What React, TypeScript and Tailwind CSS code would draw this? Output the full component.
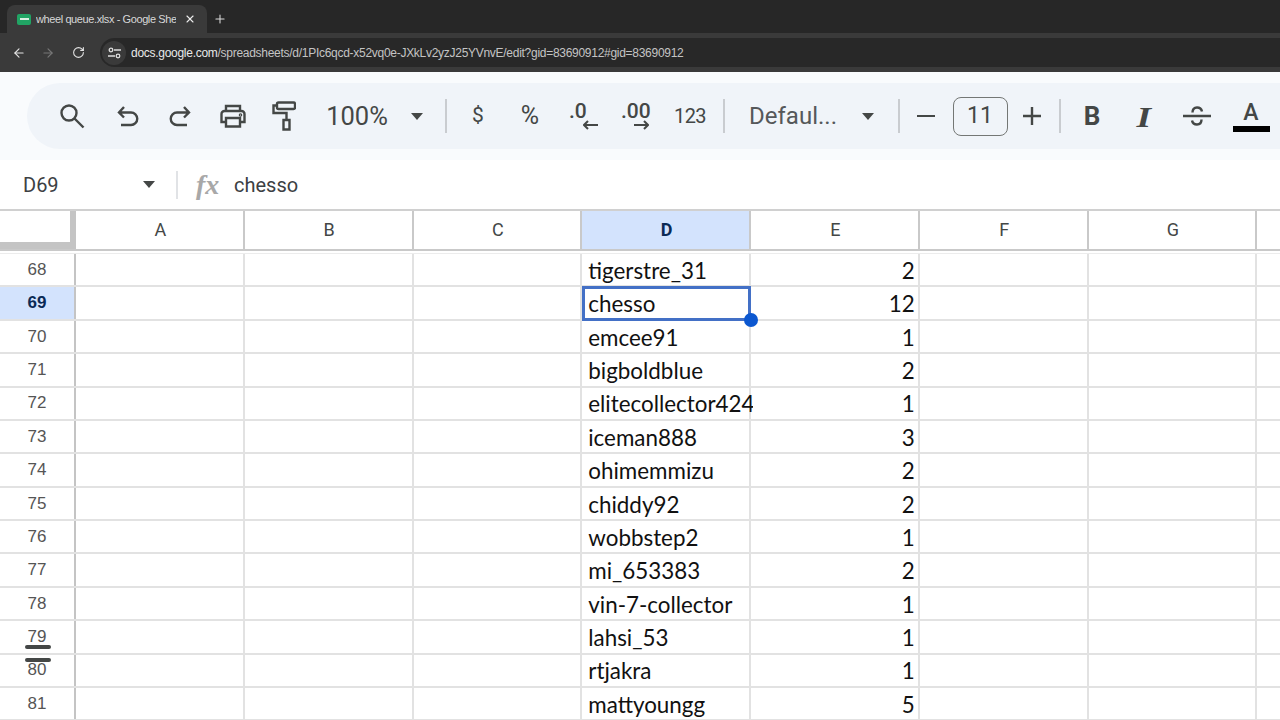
import type { ReactNode } from 'react';
import { ArrowLeft, ArrowRight, RotateCw, Plus, X } from 'lucide-react';

const ROWS: { n: number; name: string; count: number }[] = [
  { n: 68, name: 'tigerstre_31', count: 2 },
  { n: 69, name: 'chesso', count: 12 },
  { n: 70, name: 'emcee91', count: 1 },
  { n: 71, name: 'bigboldblue', count: 2 },
  { n: 72, name: 'elitecollector424', count: 1 },
  { n: 73, name: 'iceman888', count: 3 },
  { n: 74, name: 'ohimemmizu', count: 2 },
  { n: 75, name: 'chiddy92', count: 2 },
  { n: 76, name: 'wobbstep2', count: 1 },
  { n: 77, name: 'mi_653383', count: 2 },
  { n: 78, name: 'vin-7-collector', count: 1 },
  { n: 79, name: 'lahsi_53', count: 1 },
  { n: 80, name: 'rtjakra', count: 1 },
  { n: 81, name: 'mattyoungg', count: 5 },
];

const COLUMNS = ['A', 'B', 'C', 'D', 'E', 'F', 'G'];

function Tool({ className, children }: { className: string; children: ReactNode }) {
  return <div className={`flex h-full shrink-0 items-center justify-center ${className}`}>{children}</div>;
}

function Icon({ w, h, children }: { w: number; h: number; children: ReactNode }) {
  return (
    <svg width={w} height={h} viewBox={`0 0 ${w} ${h}`} fill="none" stroke="#444746" strokeWidth="2.4">
      {children}
    </svg>
  );
}

function Caret() {
  return (
    <svg width="12" height="7" viewBox="0 0 12 7">
      <path d="M0 0h12L6 7z" fill="#444746" />
    </svg>
  );
}

function Sep() {
  return <div className="h-[34px] w-[2px] bg-[#c9ccd0]" />;
}

export default function App() {
  return (
    <div className="flex h-[720px] w-[1280px] flex-col overflow-hidden bg-white font-['Roboto',sans-serif]">
      {/* browser chrome */}
      <div className="h-[33px] shrink-0 bg-[#272727] pl-[7px] pt-[5px]">
        <div className="flex items-center">
          <div className="flex h-[28px] w-[200px] items-center rounded-t-lg bg-[#3a3a3a] pl-[10px]">
            <div className="flex h-[11px] w-[14px] items-center justify-end rounded-[2px] bg-[#21a464] pr-[2px]">
              <div className="h-[2px] w-[9px] bg-[#d8f0e2]" />
            </div>
            <span className="ml-[5px] w-[140px] overflow-hidden whitespace-nowrap font-['Liberation_Sans',sans-serif] text-[11px] tracking-[-0.4px] text-[#d8d8d8]">
              wheel queue.xlsx - Google Shee
            </span>
            <X size={12} strokeWidth={2.2} className="ml-[8px] text-[#ececec]" />
          </div>
          <Plus size={14} strokeWidth={1.8} className="ml-[6px] text-[#dcdcdc]" />
        </div>
      </div>
      <div className="flex h-[39px] shrink-0 items-center bg-[#3a3a3a] pl-[12px]">
        <ArrowLeft size={14} strokeWidth={2} className="text-[#e3e3e3]" />
        <ArrowRight size={14} strokeWidth={2} className="ml-[15px] text-[#777777]" />
        <RotateCw size={13} strokeWidth={2} className="ml-[17px] text-[#e3e3e3]" />
        <div className="ml-[15px] flex h-[29px] flex-1 items-center rounded-l-full bg-[#282828] pl-[2px]">
          <div className="flex h-[24px] w-[24px] items-center justify-center rounded-full bg-[#3a3a3a]">
            <svg width="13" height="12" viewBox="0 0 13 12" fill="none" stroke="#dedede" strokeWidth="1.3">
              <circle cx="3" cy="3" r="1.8" />
              <path d="M6 3h7M0 9h7" />
              <circle cx="10" cy="9" r="1.8" />
            </svg>
          </div>
          <span className="ml-[5px] whitespace-nowrap font-['Liberation_Sans',sans-serif] text-[12px] tracking-[-0.28px] text-[#c4c4c4]">
            <span className="text-[#e8e8e8]">docs.google.com</span>/spreadsheets/d/1PIc6qcd-x52vq0e-JXkLv2yzJ25YVnvE/edit?gid=83690912#gid=83690912
          </span>
        </div>
      </div>

      {/* toolbar */}
      <div className="h-[88px] shrink-0 bg-[#f9fbfd] pl-[27px] pt-[11px]">
        <div className="flex h-[66px] items-center overflow-hidden rounded-l-[33px] bg-[#f0f4f9] pl-[17px] text-[#444746]">
          <Tool className="w-[56px]">
            <Icon w={26} h={26}>
              <circle cx="10" cy="10" r="7.5" />
              <path d="M15.5 15.5 24.5 24.5" />
            </Icon>
          </Tool>
          <Tool className="w-[56px]">
            <Icon w={22} h={22}>
              <path d="M7 2 2 7.5 7 12.5M2 7.5H14a6 6 0 0 1 0 12.5H4" />
            </Icon>
          </Tool>
          <Tool className="w-[48px]">
            <Icon w={22} h={22}>
              <path d="M15 2 20 7.5 15 12.5M20 7.5H8a6 6 0 0 0 0 12.5H18" />
            </Icon>
          </Tool>
          <Tool className="w-[58px]">
            <Icon w={28} h={24}>
              <path d="M7 7V2H21V7M7 18H2.5V10a3 3 0 0 1 3-3H22.5a3 3 0 0 1 3 3V18H21" />
              <path d="M7 14H21V22.5H7z" />
              <circle cx="21.5" cy="11" r="0.6" />
            </Icon>
          </Tool>
          <Tool className="w-[44px]">
            <Icon w={24} h={30}>
              <path d="M6.500 1.500H21.500a1.500 1.500 0 0 1 1.500 1.500V6.500a1.500 1.500 0 0 1-1.500 1.500H6.500A1.500 1.500 0 0 1 5 6.500V3a1.500 1.500 0 0 1 1.500-1.500z" />
              <path d="M5 4.500H1.500V12H14.500V19" />
              <path d="M11.500 19H17.500V28.500H11.500z" />
            </Icon>
          </Tool>
          <Tool className="w-[102px] text-[25.5px]">100%</Tool>
          <Tool className="w-[18px]">
            <Caret />
          </Tool>
          <Tool className="w-[40px]">
            <Sep />
          </Tool>
          <Tool className="w-[24px] text-[21px]">$</Tool>
          <Tool className="w-[80px] text-[25px]">%</Tool>
          <Tool className="w-[28px]">
            <div className="relative h-[34px] w-[30px] text-[21px] font-medium leading-[24px]">
              <span className="-ml-[1px]">.0</span>
              <svg width="16" height="10" viewBox="0 0 16 10" className="absolute bottom-[3px] right-[-1px]" fill="none" stroke="#444746" strokeWidth="2">
                <path d="M5 1 1 5l4 4M1 5h14" />
              </svg>
            </div>
          </Tool>
          <Tool className="w-[76px]">
            <div className="relative h-[34px] w-[30px] text-[21px] font-medium leading-[24px]">
              <span>.00</span>
              <svg width="16" height="10" viewBox="0 0 16 10" className="absolute bottom-[3px] right-[2px]" fill="none" stroke="#444746" strokeWidth="2">
                <path d="M11 1l4 4-4 4M15 5H1" />
              </svg>
            </div>
          </Tool>
          <Tool className="w-[32px] text-[20px] tracking-[-0.5px]">123</Tool>
          <Tool className="w-[36px]">
            <Sep />
          </Tool>
          <Tool className="w-[102px] text-[24px] text-[#55585a]">Defaul...</Tool>
          <Tool className="w-[48px]">
            <Caret />
          </Tool>
          <Tool className="w-[14px]">
            <Sep />
          </Tool>
          <Tool className="w-[40px]">
            <div className="h-[2.500px] w-[18px] bg-[#444746]" />
          </Tool>
          <Tool className="w-[68px]">
            <div className="flex h-[39px] w-[55px] items-center justify-center rounded-lg border border-[#747775] text-[23px]">11</div>
          </Tool>
          <Tool className="w-[36px]">
            <Icon w={18} h={18}>
              <path d="M9 0V18M0 9H18" />
            </Icon>
          </Tool>
          <Tool className="w-[20px]">
            <Sep />
          </Tool>
          <Tool className="w-[44px] text-[26px] font-bold">B</Tool>
          <Tool className="w-[60px]">
            <span className="scale-x-125 font-['Liberation_Serif',serif] text-[30px] font-bold italic">I</span>
          </Tool>
          <Tool className="w-[46px]">
            <Icon w={28} h={24}>
              <path d="M0 12H28" />
              <path d="M9.500 8.500C9.500 5.500 11 3.500 14 3.500S18.500 5 19 7.500M18.500 15.500C18.500 18.500 17 20.500 14 20.500S9.500 19 9 16.500" />
            </Icon>
          </Tool>
          <Tool className="w-[62px]">
            <div className="flex flex-col items-center pt-[1px]">
              <span className="text-[23px] font-medium leading-[24px]">A</span>
              <div className="mt-[1px] h-[6px] w-[37px] bg-black" />
            </div>
          </Tool>
        </div>
      </div>

      {/* formula bar */}
      <div className="flex h-[51px] shrink-0 items-center border-b-2 border-[#d0d0d0] bg-white">
        <span className="ml-[23px] w-[120px] text-[20px] text-[#3c4043]">D69</span>
        <Caret />
        <div className="ml-[21px] h-[28px] w-[2px] bg-[#e1e3e6]" />
        <span className="ml-[18px] w-[38px] font-['Liberation_Serif',serif] text-[28px] font-bold italic leading-none text-[#a8a8a8]">fx</span>
        <span className="text-[20px] text-[#3c4043]">chesso</span>
      </div>

      {/* column headers */}
      <div className="relative flex h-[40px] shrink-0 border-b-2 border-[#c9c9c9] text-[18px] text-[#444746]">
        <div className="h-full w-[70px] shrink-0 border-b-[7px] border-[#c4c4c4] bg-white" />
        <div className="h-full w-[6px] shrink-0 bg-[#c4c4c4]" />
        {COLUMNS.map((col) => (
          <div
            key={col}
            className={
              col === 'D'
                ? 'flex w-[168.75px] shrink-0 items-center justify-center border-r-2 border-[#c9c9c9] bg-[#d3e3fd] pb-[1px] pl-[2px] font-bold text-[#0b2a55]'
                : 'flex w-[168.75px] shrink-0 items-center justify-center border-r-2 border-[#c9c9c9] pb-[1px] pl-[2px]'
            }
          >
            {col}
          </div>
        ))}
      </div>

      {/* frozen divider */}
      <div className="h-[3px] shrink-0 border-b border-[#ececec] bg-white" />

      {/* rows */}
      <div className="flex flex-col">
        {ROWS.map((row) => {
          const active = row.n === 69;
          return (
            <div key={row.n} className="flex h-[33.38px] shrink-0 border-b-2 border-[#e2e2e2]">
              <div
                className={
                  active
                    ? 'flex w-[76px] shrink-0 items-center justify-center border-r-2 border-[#c4c4c4] bg-[#d3e3fd] font-["Liberation_Sans",sans-serif] text-[17px] font-bold text-[#0b2a55]'
                    : 'relative flex w-[76px] shrink-0 items-center justify-center border-r-2 border-[#c4c4c4] font-["Liberation_Sans",sans-serif] text-[17px] text-[#555555]'
                }
              >
                {row.n}
                {row.n === 79 && <div className="absolute bottom-[4px] left-[25px] h-[4px] w-[26px] rounded-full bg-[#444746]" />}
                {row.n === 80 && <div className="absolute left-[25px] top-[3px] h-[4px] w-[26px] rounded-full bg-[#444746]" />}
              </div>
              {COLUMNS.map((col) => {
                if (col === 'D') {
                  return (
                    <div
                      key={col}
                      className={
                        active
                          ? "relative z-10 -mb-[2px] -mt-[1px] flex w-[168.75px] shrink-0 items-center whitespace-nowrap border-[3px] border-[#4370c6] bg-white pl-[3px] pt-[1px] font-['Lato',sans-serif] text-[22.4px] text-[#111111]"
                          : "flex w-[168.75px] shrink-0 items-center whitespace-nowrap border-r-2 border-[#e2e2e2] pl-[6px] pt-[2px] font-['Lato',sans-serif] text-[22.4px] text-[#111111]"
                      }
                    >
                      <span className={active ? '' : 'w-[165px] shrink-0 overflow-hidden'}>{row.name}</span>
                      {active && <div className="absolute bottom-[-9px] right-[-10px] h-[14px] w-[14px] rounded-full bg-[#0b57d0]" />}
                    </div>
                  );
                }
                if (col === 'E') {
                  return (
                    <div
                      key={col}
                      className="flex w-[168.75px] shrink-0 items-center justify-end border-r-2 border-[#e2e2e2] pr-[3px] pt-[2px] font-['Lato',sans-serif] text-[22.4px] text-[#111111]"
                    >
                      {row.count}
                    </div>
                  );
                }
                return <div key={col} className="w-[168.75px] shrink-0 border-r-2 border-[#e2e2e2]" />;
              })}
            </div>
          );
        })}
      </div>
    </div>
  );
}
